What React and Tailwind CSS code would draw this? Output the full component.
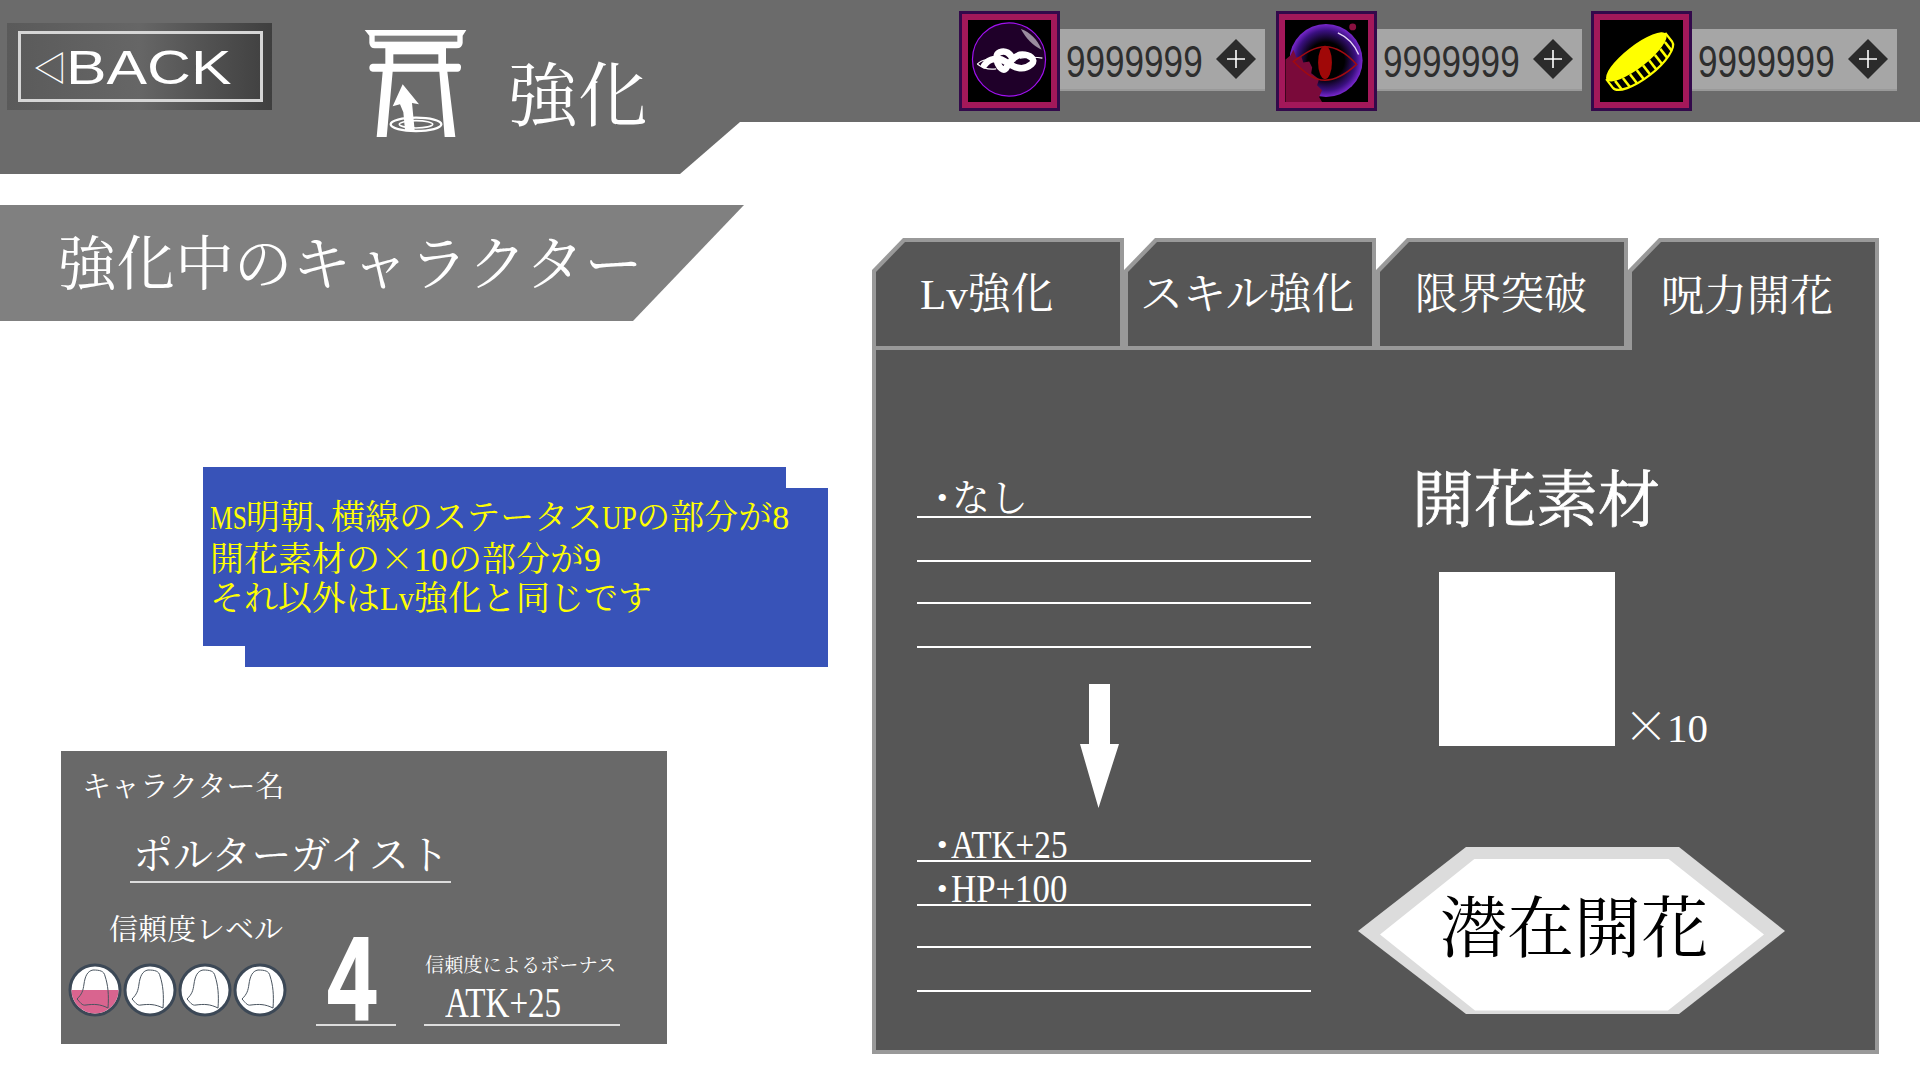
const SERIF = "font-['Liberation_Serif','Noto_Serif_CJK_JP','Noto_Sans_CJK_JP',serif]"

function ToriiIcon() {
  return (
    <svg viewBox="0 0 390 390" className="w-[130px] h-[130px] shrink-0 mt-[15px] ml-[78px]" fill="#fff">
      <path d="M44 45H349L338 62V84Q336 100 320 100H288V146H326Q334 148 333 158Q332 170 322 170H292L316 366H284L268 170H128L110 366H80L98 170H68Q58 168 58 158Q58 148 68 146H106V100H74Q60 100 58 84V62Z" />
      <rect x="74" y="62" width="248" height="18" fill="#7c7c7c" />
      <rect x="130" y="118" width="135" height="28" fill="#6b6b6b" />
      <path d="M158 208L207 268L186 264L194 346H165L160 292L150 268L128 274Z" />
      <ellipse cx="198" cy="328" rx="76" ry="20" fill="none" stroke="#fff" strokeWidth="7" />
      <ellipse cx="198" cy="328" rx="50" ry="11" fill="none" stroke="#fff" strokeWidth="5" />
    </svg>
  )
}

function FrameIcon({ children }) {
  return (
    <div className="w-[101px] h-[100px] shrink-0 bg-[#33094b] p-[3px]">
      <div className="w-full h-full bg-[#a3185a] p-[6px]">
        <div className="w-full h-full bg-black">{children}</div>
      </div>
    </div>
  )
}

function KnotIcon() {
  return (
    <svg viewBox="0 0 83 83" className="w-full h-full">
      <circle cx="41" cy="40" r="37" fill="#1f0029" stroke="#a010f0" strokeWidth="1.2" />
      <path d="M53 9C62 12 70 20 74 30C65 26 58 18 53 9Z" fill="#fff" opacity="0.55" />
      <g transform="translate(-8 -7) scale(1.2)">
        <path
          d="M20 44C24 38 32 37 38 41C44 45 52 50 60 43C64 39 58 35 52 35C46 35 42 40 38 47C34 51 26 36 33 33C38 31 42 34 44 39"
          fill="none"
          stroke="#fff"
          strokeWidth="5.5"
          strokeLinecap="round"
          strokeLinejoin="round"
        />
        <path d="M14 43C18 39 26 38 30 39M14 43C18 46 24 48 30 47M50 38C58 37 64 37 69 38" fill="none" stroke="#fff" strokeWidth="1" />
      </g>
    </svg>
  )
}

function EyeIcon() {
  return (
    <svg viewBox="0 0 83 83" className="w-full h-full">
      <defs>
        <radialGradient id="bubble" cx="50%" cy="50%" r="50%">
          <stop offset="50%" stopColor="#000" />
          <stop offset="82%" stopColor="#3a1080" />
          <stop offset="100%" stopColor="#7a28d0" />
        </radialGradient>
      </defs>
      <circle cx="41" cy="41" r="37" fill="url(#bubble)" />
      <circle cx="68" cy="7" r="3.5" fill="#8a1040" />
      <path d="M53 13C62 17 70 25 74 35" fill="none" stroke="#e8d8f8" strokeWidth="1.4" />
      <path d="M0 83V40L5 36L8 30L11 38L16 37L18 43L24 42L27 48L26 54L34 60L32 66L37 71L34 78L37 83Z" fill="#7a0a3a" />
      <path d="M8 42C22 32 30 27 40 27C52 27 64 36 72 45C62 54 50 61 40 61C28 61 18 52 8 42Z" fill="none" stroke="#a00a10" strokeWidth="1.6" />
      <ellipse cx="40" cy="43" rx="7" ry="17" fill="#a00808" />
    </svg>
  )
}

function CoinIcon() {
  const ridges = [-32, -24, -16, -8, 0, 8, 16, 24, 32]
  return (
    <svg viewBox="0 0 83 83" className="w-full h-full">
      <g transform="rotate(-38 40 42)">
        <path d="M2 36V46A38 13 0 0 0 78 46V36Z" fill="#000" stroke="#ffff00" strokeWidth="2.2" />
        {ridges.map((dx) => {
          const arc = Math.sqrt(1 - (dx * dx) / (38 * 38))
          return <line key={dx} x1={40 + dx} y1={36 + 11 * arc} x2={40 + dx} y2={46 + 13 * arc} stroke="#ffff00" strokeWidth="2.6" />
        })}
        <ellipse cx="40" cy="36" rx="38" ry="11" fill="#ffff00" />
      </g>
    </svg>
  )
}

function Currency({ icon, gap }) {
  return (
    <div className={`flex items-start shrink-0 ${gap}`}>
      <FrameIcon>{icon}</FrameIcon>
      <div className="w-[205px] h-[62px] mt-[18px] bg-[#a6a6a6] border-b-2 border-[#999] flex items-center pl-[6px] pr-[9px]">
        <span className="inline-block w-[136px] pt-[4px] origin-left scale-x-[.78] font-['Liberation_Sans',sans-serif] text-[45px] leading-none text-[#2e2e2e]">
          9999999
        </span>
        <svg viewBox="0 0 40 40" className="w-10 h-10 ml-auto">
          <path d="M20 0L40 20L20 40L0 20Z" fill="#2b2b2b" />
          <path d="M20 11V29M11 20H29" stroke="#fff" strokeWidth="1.6" />
        </svg>
      </div>
    </div>
  )
}

function Header() {
  return (
    <div className="flex h-[174px] shrink-0">
      <div className="w-[740px] h-[174px] bg-[#6b6b6b] flex items-start pl-[7px] [clip-path:polygon(0_0,100%_0,100%_122px,680px_100%,0_100%)]">
        <div className="w-[265px] h-[87px] mt-[23px] shrink-0 py-[8px] px-[11px] bg-gradient-to-r from-[#5a5a5a] via-[#666] to-[#3f3f3f]">
          <div className="w-[245px] h-[71px] border-[3px] border-[#d6d6d6] flex items-center pl-[12px] text-white font-['Liberation_Sans',sans-serif]">
            <span className="text-[34px] leading-none w-[33px] font-['Noto_Sans_CJK_JP',sans-serif]">◁</span>
            <span className="inline-block pt-[2px] origin-left scale-x-[1.24] text-[49px] leading-none">BACK</span>
          </div>
        </div>
        <ToriiIcon />
        <div className={`ml-[28px] mt-[63px] text-[70px] leading-[70px] text-white whitespace-nowrap ${SERIF}`}>強化</div>
      </div>
      <div className="w-[1180px] h-[122px] bg-[#6b6b6b] flex items-start pl-[219px] pt-[11px]">
        <Currency icon={<KnotIcon />} gap="mr-[11px]" />
        <Currency icon={<EyeIcon />} gap="mr-[9px]" />
        <Currency icon={<CoinIcon />} gap="" />
      </div>
    </div>
  )
}

function Stone({ filled }) {
  return (
    <svg viewBox="0 0 54 54" className="w-[54px] h-[54px] shrink-0">
      <circle cx="27" cy="27" r="25" fill="#fff" stroke="#3c4856" strokeWidth="3" />
      {filled && <path d="M3.5 27A23.5 23.5 0 0 0 50.5 27Z" fill="#d9648f" />}
      <path
        d="M25 7C19 8 17 14 16 21C15 28 14 31 9 36C12 39 14 43 18 42C26 41 32 41 40 45C41 32 40 22 37 13C36 8 32 7 25 7Z"
        fill="none"
        stroke="#4a5560"
        strokeWidth="1"
      />
    </svg>
  )
}

function CharacterCard() {
  return (
    <div className="w-[606px] h-[293px] ml-[61px] mt-[84px] bg-[#696969] text-white overflow-hidden">
      <div className="ml-[21px] mt-[22px] text-[29px] leading-[28px] whitespace-nowrap">キャラクター名</div>
      <div className="ml-[69px] mt-[36px] w-[321px] border-b-2 border-[#ddd] pl-[3px] pb-[6px] text-[40px] leading-[38px] whitespace-nowrap">
        ポルターガイスト
      </div>
      <div className="flex mt-[32px] h-[111px]">
        <div className="w-[255px] pl-[7px] shrink-0">
          <div className="ml-[41px] pt-px text-[29px] leading-[29px] whitespace-nowrap">信頼度レベル</div>
          <div className="flex gap-px mt-[18px]">
            <Stone filled />
            <Stone />
            <Stone />
            <Stone />
          </div>
        </div>
        <div className="w-[80px] mt-[19px] h-[92px] border-b-2 border-[#ddd] flex justify-center pr-[8px] shrink-0">
          <span className="inline-block scale-x-[.74] font-['Liberation_Sans',sans-serif] font-bold text-[118px] leading-[90px] [-webkit-text-stroke:2px_white]">
            4
          </span>
        </div>
        <div className="ml-[28px] w-[196px] border-b-2 border-[#ddd] shrink-0 h-[111px]">
          <div className="ml-[1px] mt-[41px] text-[19.2px] leading-[20px] whitespace-nowrap">信頼度によるボーナス</div>
          <div className="pl-[21px] mt-[9px] leading-[36px] text-[43px]">
            <span className="inline-block origin-left scale-x-[.77]">ATK+25</span>
          </div>
        </div>
      </div>
    </div>
  )
}

function NoteBox() {
  return (
    <div className="ml-[203px] mt-[146px] w-[625px] h-[200px] bg-[#3853b8] text-[#ffff00] pl-[7px] pt-[31px] text-[34px] whitespace-nowrap [clip-path:polygon(0_0,583px_0,583px_21px,100%_21px,100%_100%,42px_100%,42px_179px,0_179px)]">
      <div className="h-[40.5px] leading-[40px]">
        <span className="inline-block w-[36px] origin-left scale-x-[.75]">MS</span>明朝<span className="tracking-[-0.5em]">、</span>横線のステータス<span className="inline-block w-[34px] origin-left scale-x-[.8]">UP</span>の部分が8
      </div>
      <div className="h-[40.5px] leading-[40px] -translate-y-[2px]">
        開花素材の<span className="inline-block w-[34px] text-center font-['Noto_Serif_CJK_JP',serif]">×</span>10の部分が9
      </div>
      <div className="h-[40.5px] leading-[40px]">
        それ以外は<span className="inline-block w-[34px] origin-left scale-x-[.9]">Lv</span>強化と同じです
      </div>
    </div>
  )
}

function LeftColumn() {
  return (
    <div className="w-[872px] shrink-0">
      <div className="mt-[31px] w-[744px] h-[116px] bg-[#808080] flex items-center pl-[58px] pt-[6px] text-white text-[58.6px] leading-none whitespace-nowrap [clip-path:polygon(0_0,100%_0,633px_100%,0_100%)]">
        強化中のキャラクター
      </div>
      <NoteBox />
      <CharacterCard />
    </div>
  )
}

function Tab({ label, active, pad, width }) {
  return (
    <div className={`${width} h-[112px] shrink-0 bg-[#999] px-1 pt-1 [clip-path:polygon(31px_0,100%_0,100%_100%,0_100%,0_32px)]`}>
      <div
        className={`${active ? 'h-[108px]' : 'h-[104px]'} bg-[#565656] flex items-center text-white text-[43px] leading-none whitespace-nowrap ${pad} [clip-path:polygon(29px_0,100%_0,100%_100%,0_100%,0_30px)]`}
      >
        {label}
      </div>
    </div>
  )
}

function StatRow({ h, children }) {
  return (
    <div className={`${h} border-b-2 border-white flex items-end pl-[20px] text-white text-[38px] leading-[36px] whitespace-nowrap`}>
      {children}
    </div>
  )
}

function RightPanel() {
  return (
    <div className="w-[1007px] mt-[64px] shrink-0">
      <div className="flex">
        <Tab label="Lv強化" pad="pl-[44px]" width="w-[252px]" />
        <Tab label="スキル強化" pad="pl-[12px]" width="w-[252px]" />
        <Tab label="限界突破" pad="pl-[35px]" width="w-[252px]" />
        <Tab label="呪力開花" pad="pl-[29px]" width="w-[251px]" active />
      </div>
      <div className="h-[704px] bg-[#565656] border-x-4 border-b-4 border-[#999] flex">
        <div className="ml-[41px] w-[394px] shrink-0 pt-[124px]">
          <StatRow h="h-[44px]">
            <span className="w-[15px] text-[30px] leading-[36px]">•</span>
            なし
          </StatRow>
          <StatRow h="h-[44px]" />
          <StatRow h="h-[42px]" />
          <StatRow h="h-[44px]" />
          <svg viewBox="0 0 40 124" className="w-10 h-[124px] ml-[162px] mt-[36px] mb-[10px] block" fill="#fff">
            <path d="M10 0H31V60H40L19.5 124L1 60H10Z" />
          </svg>
          <StatRow h="h-[44px]">
            <span className="w-[14px] text-[30px] leading-[30px]">•</span>
            <span className="inline-block origin-left scale-x-[.83] text-[40px] leading-[30px]">ATK+25</span>
          </StatRow>
          <StatRow h="h-[44px]">
            <span className="w-[14px] text-[30px] leading-[30px]">•</span>
            <span className="inline-block origin-left scale-x-[.87] text-[40px] leading-[30px]">HP+100</span>
          </StatRow>
          <StatRow h="h-[42px]" />
          <StatRow h="h-[44px]" />
        </div>
        <div className="ml-[105px] w-[400px] pt-[120px] text-white">
          <div className="ml-[-4px] text-[62px] leading-[62px] [-webkit-text-stroke:0.8px_white] whitespace-nowrap">開花素材</div>
          <div className="flex items-end ml-[23px] mt-[40px]">
            <div className="w-[176px] h-[174px] bg-white" />
            <span className="ml-[8px] text-[41px] leading-[36px] whitespace-nowrap">
              <span className="font-['Noto_Serif_CJK_JP',serif] inline-block w-[44px] text-center text-[46px]">×</span>10
            </span>
          </div>
          <button
            type="button"
            className="block ml-[-58px] mt-[101px] w-[427px] h-[167px] bg-[#dcdcdc] p-0 [clip-path:polygon(108px_0,321px_0,100%_84px,321px_100%,108px_100%,0_84px)]"
          >
            <div className="w-[384px] h-[152px] ml-[22px] mt-[8px] pb-[10px] pl-[4px] bg-white flex items-center justify-center text-black text-[67px] leading-none whitespace-nowrap [clip-path:polygon(95px_0,288px_0,100%_76px,288px_100%,95px_100%,0_76px)]">
              潜在開花
            </div>
          </button>
        </div>
      </div>
    </div>
  )
}

export default function App() {
  return (
    <div className={`w-[1920px] h-[1080px] bg-white overflow-hidden flex flex-col ${SERIF}`}>
      <Header />
      <div className="flex">
        <LeftColumn />
        <RightPanel />
      </div>
    </div>
  )
}
